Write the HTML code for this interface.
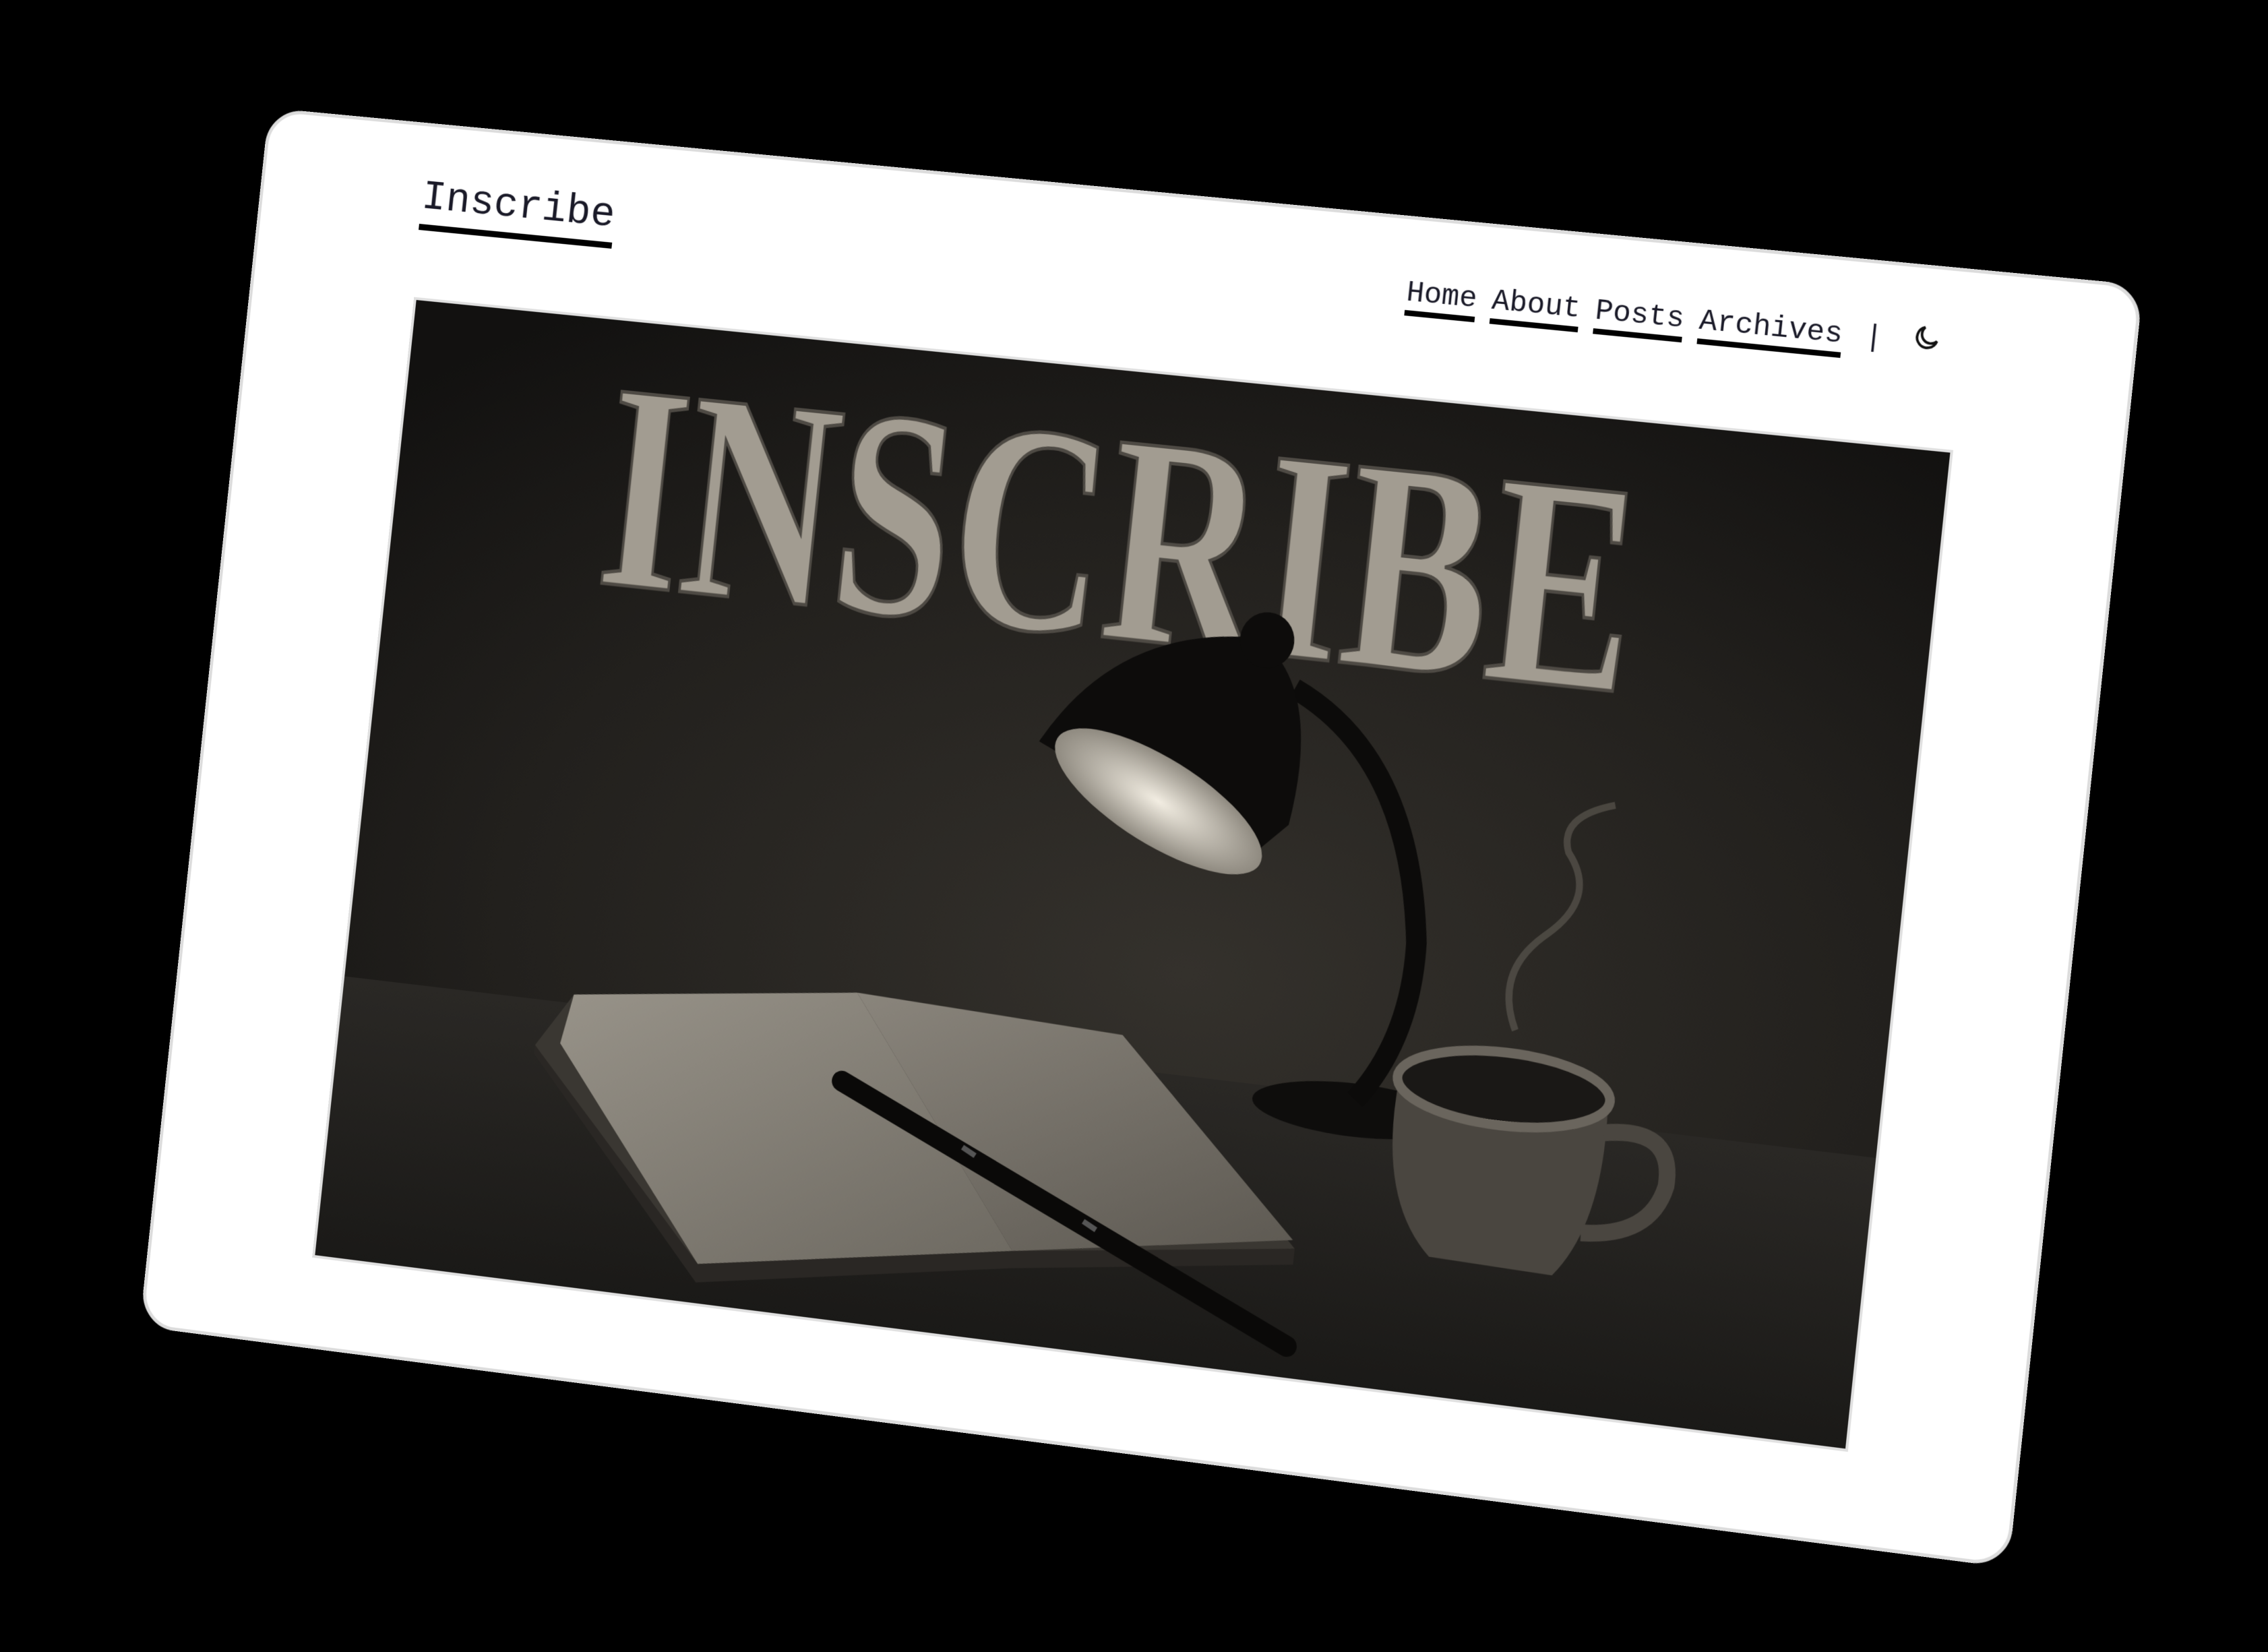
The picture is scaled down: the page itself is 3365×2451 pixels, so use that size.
<!DOCTYPE html>
<html><head><meta charset="utf-8"><style>
html,body{margin:0;padding:0;background:#000;width:3365px;height:2451px;overflow:hidden}
.card{position:absolute;left:0;top:0;width:2790px;height:1810px;background:#fff;border-radius:54px;border:5px solid #dcdcdc;box-sizing:border-box;transform-origin:0 0;
transform:matrix3d(0.94004,0.086717,0,-0.00001785,-0.10616,0.99812,0,-0.00000039,0,0,1,0,399,160,0,1)}
.title{position:absolute;left:246px;top:64px;font-family:"Liberation Mono",monospace;font-size:62px;color:#1a1a28;border-bottom:9px solid #000;line-height:80px}
.nav{position:absolute;left:1734px;top:80px;font-family:"Liberation Mono",monospace;font-size:43px;color:#1a1a28;display:flex;gap:22px;align-items:flex-start}
.nav span.l{border-bottom:8px solid #000;line-height:50px}
.img{position:absolute;left:250px;top:252px;width:2292px;height:1420px;border:4px solid #e0e0e0;box-sizing:border-box;overflow:hidden}
</style></head><body>
<div class="card">
<div class="title">Inscribe</div>
<div class="nav"><span class="l">Home</span><span class="l">About</span><span class="l">Posts</span><span class="l">Archives</span><span style="line-height:50px;margin-left:10px">|</span>
<svg width="44" height="44" viewBox="0 0 24 24" style="margin-left:18px;margin-top:-4px" fill="none" stroke="#111" stroke-width="2"><path d="M20 14A8 8 0 1 1 10 4a6 6 0 0 0 10 10z"/></svg></div>
<div class="img">
<svg width="2292" height="1420" viewBox="0 0 2292 1420">
<defs>
<radialGradient id="bg" cx="0.55" cy="0.6" r="0.75"><stop offset="0" stop-color="#34312c"/><stop offset="0.6" stop-color="#22201d"/><stop offset="1" stop-color="#121110"/></radialGradient>
<radialGradient id="gl" cx="0.5" cy="0.5" r="0.5"><stop offset="0" stop-color="#f2ede2"/><stop offset="1" stop-color="#8f8a80"/></radialGradient>
<linearGradient id="bk" x1="0" y1="0" x2="1" y2="1"><stop offset="0" stop-color="#8a857c"/><stop offset="1" stop-color="#5a564f"/></linearGradient>
<linearGradient id="bk2" x1="0" y1="0" x2="1" y2="1"><stop offset="0" stop-color="#9a958b"/><stop offset="1" stop-color="#6a665e"/></linearGradient>
<linearGradient id="fl" x1="0" y1="0" x2="0" y2="1"><stop offset="0" stop-color="#2a2825"/><stop offset="1" stop-color="#1a1917"/></linearGradient>
</defs>
<rect width="2292" height="1420" fill="url(#bg)"/>
<rect y="1000" width="2292" height="420" fill="url(#fl)"/>
<text x="318" y="385" font-family="Liberation Serif,serif" font-weight="bold" font-size="430" fill="#a29c91" stroke="#4e4a44" stroke-width="5" textLength="1540" lengthAdjust="spacingAndGlyphs">INSCRIBE</text>
<ellipse cx="1529" cy="1020" rx="150" ry="38" fill="#0e0d0c"/>
<path d="M1378 430 Q1560 510 1594 773 Q1600 910 1529 1005" stroke="#0c0b0a" stroke-width="30" fill="none"/>
<path d="M1010 545 Q1110 365 1318 363 Q1420 425 1390 625 L1330 685 Z" fill="#0d0c0b"/>
<circle cx="1330" cy="365" r="40" fill="#0d0c0b"/>
<ellipse cx="1195" cy="612" rx="175" ry="62" transform="rotate(25 1195 612)" fill="url(#gl)"/>
<polygon points="302,1067 353,987 779,936 1179,952 1464,1227 1050,1298 583,1375" fill="#3a3732"/>
<polygon points="340,1060 353,987 779,936 1050,1280 583,1355" fill="url(#bk2)"/>
<polygon points="779,936 1179,952 1460,1215 1050,1280" fill="url(#bk)"/>
<polygon points="583,1355 1050,1280 1464,1227 1464,1250 1050,1305 583,1382 302,1080 302,1067" fill="#2a2724"/>
<path d="M770 1066 L1467 1367" stroke="#0a0908" stroke-width="30" stroke-linecap="round"/>
<path d="M960 1140 L980 1150 M1150 1225 L1170 1235" stroke="#555" stroke-width="8"/>
<path d="M1590 965 Q1575 1140 1660 1215 L1840 1220 Q1905 1140 1895 975 Z" fill="#4a4640"/>
<ellipse cx="1742" cy="965" rx="155" ry="52" fill="#1a1816" stroke="#6a655d" stroke-width="14"/>
<path d="M1893 1010 Q1995 990 1990 1075 Q1975 1150 1875 1155" stroke="#4a4640" stroke-width="24" fill="none"/>
<path d="M1750 880 Q1710 800 1780 740 Q1850 680 1800 620 Q1780 570 1860 546" stroke="#5a564f" stroke-width="10" fill="none" opacity="0.7"/>
</svg>
</div>
</div>
</body></html>
